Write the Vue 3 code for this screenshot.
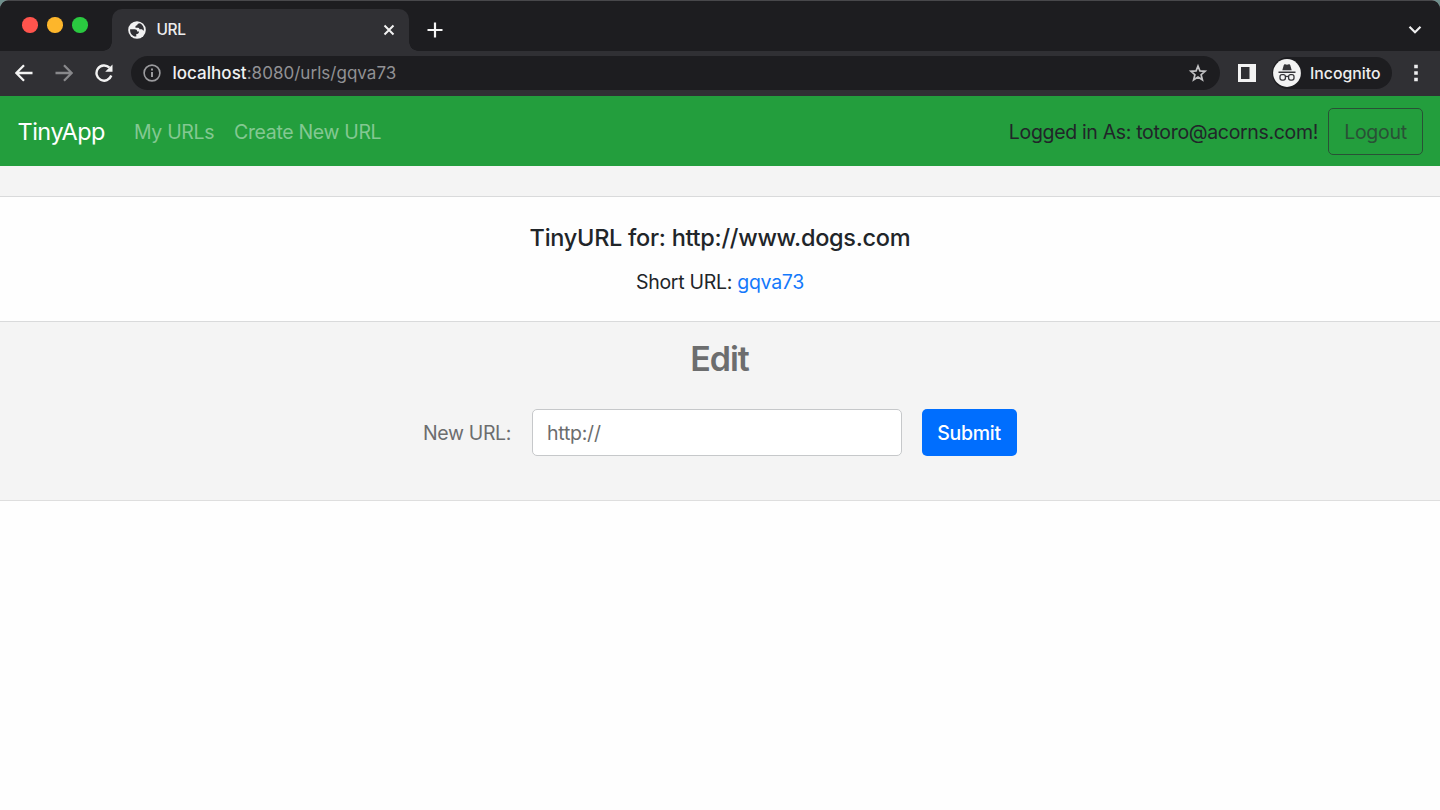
<script setup>
import { ref } from 'vue'

const tabTitle = 'URL'
const user = 'totoro@acorns.com'
const longUrl = 'http://www.dogs.com'
const shortId = 'gqva73'
const newUrl = ref('')
</script>

<template>
  <div class="window">
    <header class="chrome">
      <div class="tab-strip">
        <div class="lights"><i class="red"></i><i class="yellow"></i><i class="green"></i></div>
        <div class="tab">
          <svg class="globe" viewBox="0 0 18 18" width="18" height="18">
            <circle cx="9" cy="9" r="8.8" fill="#f1f1f2" />
            <path d="M12 2.200C10.200 2.300 9.300 3 9.200 4.300 7.700 4.300 7.200 5.300 7.500 6.700h2.600c1 0 1.300.8 1.300 1.600h2.300c.9 0 .8 1.200 1.700 1.200h.5C16.200 6.300 14.700 3.600 12 2.200zM2.100 8.200h4.400c1.600 0 2.700.9 2.700 2.300h1.800c0 2-1.200 2.500-2.700 2.500v2.500c-3.300.3-6.600-2.900-6.200-7.300z" fill="#303035" />
          </svg>
          <span class="tab-title">{{ tabTitle }}</span>
          <svg class="close" viewBox="0 0 12 12" width="12" height="12"><path d="M1.500 1.500l9 9M10.500 1.500l-9 9" stroke="#f2f2f2" stroke-width="2" fill="none" /></svg>
        </div>
        <svg class="plus" viewBox="0 0 16 16" width="16" height="16"><path d="M8 .5v15M.5 8h15" stroke="#f5f5f5" stroke-width="2.200" /></svg>
        <svg class="chevron" viewBox="0 0 14 10" width="14" height="10"><path d="M1.500 1.800L7 7.300l5.500-5.500" stroke="#ececed" stroke-width="2.200" fill="none" /></svg>
      </div>
      <div class="toolbar">
        <svg class="nav-icon" viewBox="0 0 18 18" width="18" height="18"><path d="M17.500 9H2M9 1.200L1.300 9 9 16.800" stroke="#f3f3f3" stroke-width="2.300" fill="none" /></svg>
        <svg class="nav-icon" viewBox="0 0 18 18" width="18" height="18"><path d="M.5 9H16M9 1.200L16.700 9 9 16.800" stroke="#88888b" stroke-width="2.300" fill="none" /></svg>
        <svg class="nav-icon" viewBox="0 0 18 18" width="18" height="18"><path d="M16.300 11.500A7.600 7.600 0 1 1 14.500 3.700" stroke="#f3f3f3" stroke-width="2.400" fill="none" /><path d="M17.500.5v7.300h-7.300z" fill="#f3f3f3" /></svg>
        <div class="address">
          <svg viewBox="0 0 18 18" width="18" height="18"><circle cx="9" cy="9" r="7.900" stroke="#9b9b9e" stroke-width="1.600" fill="none" /><path d="M9 8v5M9 4.500v2" stroke="#9b9b9e" stroke-width="2" /></svg>
          <span class="location"><b>localhost</b>:8080/urls/{{ shortId }}</span>
          <svg class="star" viewBox="0 0 20 20" width="20" height="20"><path d="M10 3l1.900 4.900 5.200.4-4 3.400 1.300 5.100-4.400-2.800-4.400 2.800 1.300-5.100-4-3.400 5.200-.4z" stroke="#c2c2c4" stroke-width="1.700" fill="none" /></svg>
        </div>
        <svg class="panel" viewBox="0 0 18 18" width="18" height="18"><path d="M0 0h18v18H0zM3 3v12h8.500V3z" fill="#f3f3f3" fill-rule="evenodd" /></svg>
        <div class="profile">
          <svg viewBox="0 0 28 28" width="28" height="28">
            <circle cx="14" cy="14" r="13.900" fill="#f3f3f3" />
            <path d="M9.300 11.200l1.500-5.300q.3-1 1.300-.7l1.900.6 1.900-.6q1-.3 1.300.7l1.500 5.300z" fill="#36363a" />
            <path d="M5.500 13.200h17" stroke="#36363a" stroke-width="1.400" />
            <g fill="none" stroke="#36363a" stroke-width="1.300"><rect x="7" y="15.700" width="5.400" height="5.400" rx="2" /><rect x="15.600" y="15.700" width="5.400" height="5.400" rx="2" /><path d="M12.400 17.700q1.600-.8 3.200 0" /></g>
          </svg>
          <span>Incognito</span>
        </div>
        <svg class="dots" viewBox="0 0 4 18" width="4" height="18"><path d="M.2.700h3.600v3.600H.200zM.2 7.200h3.600v3.600H.200zM.2 13.700h3.600v3.600H.200z" fill="#ededee" /></svg>
      </div>
    </header>

    <nav class="navbar">
      <a class="brand">TinyApp</a>
      <a class="link my-urls">My URLs</a>
      <a class="link create">Create New URL</a>
      <span class="account">Logged in As: {{ user }}!</span>
      <button class="logout" type="button">Logout</button>
    </nav>

    <main>
      <div class="spacer"></div>
      <section class="details">
        <h5>TinyURL for: {{ longUrl }}</h5>
        <p><span class="short-label">Short URL:</span> <a>{{ shortId }}</a></p>
      </section>
      <section class="edit">
        <h3>Edit</h3>
        <form @submit.prevent>
          <label for="new-url">New URL:</label>
          <input id="new-url" v-model="newUrl" placeholder="http://" />
          <button type="submit">Submit</button>
        </form>
      </section>
    </main>
  </div>
</template>

<style>
body { margin: 0; background: #6f8f8c; overflow: hidden; }
</style>

<style scoped>
.window { width: 1440px; height: 810px; overflow: hidden; border-radius: 9px 9px 0 0; background: #fefefe; font: 430 20px/30px Inter, "Liberation Sans", sans-serif; color: #212529; }
* { box-sizing: border-box; }
svg { display: block; flex: none; }
.chrome { height: 96px; background: #303034; }
.tab-strip { display: flex; height: 51px; background: linear-gradient(#48484b 0 1px, #1d1d20 1px); }
.lights { display: flex; width: 112px; height: 51px; gap: 9.500px; padding: 17px 0 0 22px; }
.lights i { width: 15.500px; height: 15.500px; border-radius: 50%; }
.red { background: #ff544d; }
.yellow { background: #fdb62b; }
.green { background: #2ac940; }
.tab { position: relative; display: flex; align-items: center; width: 297px; height: 42px; margin-top: 9px; padding: 0 14px 0 16px; border-radius: 10px 10px 0 0; background: #303034; }
.tab::before, .tab::after { content: ""; position: absolute; bottom: 0; width: 9px; height: 9px; }
.tab::before { left: -9px; background: radial-gradient(circle at 0 0, transparent 8.500px, #303034 9px); }
.tab::after { right: -9px; background: radial-gradient(circle at 100% 0, transparent 8.500px, #303034 9px); }
.tab-title { margin-left: 10.500px; font-size: 15.500px; font-weight: 450; color: #ececed; letter-spacing: -.4px; }
.close { margin-left: auto; }
.plus { margin: 22px 0 0 18px; }
.chevron { margin: 25px 18px 0 auto; }
.toolbar { display: flex; align-items: center; height: 44px; padding: 0 22px 0 15px; }
.nav-icon { margin-right: 22px; }
.address { display: flex; align-items: center; width: 1089px; height: 34px; margin-left: -4px; padding: 0 12px; border-radius: 17px; background: #1d1d20; }
.location { margin-left: 11.500px; font-size: 17px; letter-spacing: .03px; color: #919194; white-space: nowrap; }
.location b { font-weight: 550; color: #f0f0f1; }
.star { margin-left: auto; }
.panel { margin-left: 18px; }
.profile { display: flex; align-items: center; width: 120px; height: 32px; margin-left: 16px; padding-left: 1px; border-radius: 16px; background: #1d1d20; }
.profile span { margin-left: 9px; padding-top: 1px; font-size: 15.800px; font-weight: 530; letter-spacing: 0; color: #ededee; }
.dots { margin-left: auto; }
.navbar { display: flex; align-items: center; height: 70px; padding: 1px 17px 0 17.500px; background: #239e3d; white-space: nowrap; }
.brand { width: 116.500px; font-size: 23.500px; letter-spacing: -.5px; color: #fff; }
.link { color: #83c892; font-size: 19.500px; letter-spacing: -.34px; }
.my-urls { width: 100px; }
.account { margin-left: auto; margin-right: 10px; font-size: 19.500px; letter-spacing: -.33px; }
.logout { width: 95px; height: 47px; padding: 0; border: 1.500px solid #295136; border-radius: 5px; background: transparent; color: #295136; font: inherit; font-size: 19.500px; letter-spacing: -.3px; }
.spacer { height: 31px; border-bottom: 1px solid #d9dadb; background: #f4f4f4; }
.details { height: 125px; padding-top: 25px; border-bottom: 1px solid #d9dadb; text-align: center; }
h5 { margin: 0; height: 32px; font-size: 23.500px; line-height: 32px; font-weight: 530; letter-spacing: -.28px; }
p { margin: 13px 0 0; font-size: 19.500px; letter-spacing: -.28px; }
p a { color: #1479fb; }
.edit { height: 179px; padding-top: 14px; border-bottom: 1px solid #dedede; background: #f4f4f4; color: #6c6d6e; text-align: center; }
h3 { margin: 0; height: 46px; font-size: 34px; line-height: 46px; font-weight: 560; letter-spacing: -1px; padding-right: 1px; }
form { display: flex; align-items: center; height: 47px; margin: 27px 0 0 423px; }
label { width: 109px; text-align: left; font-size: 19.500px; letter-spacing: -.35px; }
input { width: 370px; height: 47px; padding: 0 14px; border: 1px solid #c6c8ca; border-radius: 5px; background: #fff; font: inherit; font-size: 19.500px; letter-spacing: -.25px; outline: 0; }
input::placeholder { color: #6c6d6e; opacity: 1; }
form button { width: 95px; height: 47px; margin-left: 20px; padding: 0 1px 0 0; border: 0; border-radius: 5px; background: #006efe; color: #fff; font: inherit; font-size: 19.500px; font-weight: 450; letter-spacing: -.3px; }
</style>
